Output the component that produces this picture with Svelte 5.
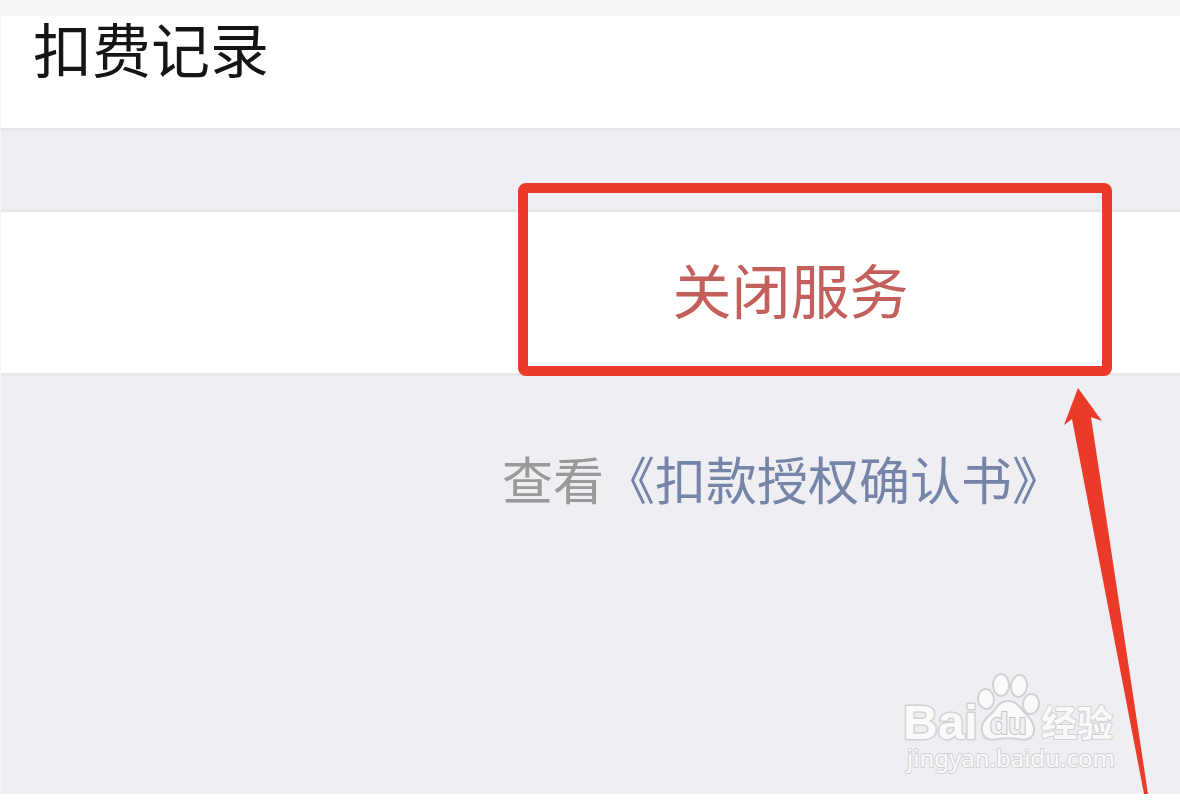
<script>
  const recordsTitle = '扣费记录';
  const closeLabel = '关闭服务';
  const agreement = '《扣款授权确认书》';
</script>

<main>
  <div class="topbar"></div>

  <section class="row records">
    <h1>{recordsTitle}</h1>
  </section>

  <section class="row service">
    <button type="button">{closeLabel}</button>
    <div class="marker"></div>
  </section>

  <p class="agreement">
    <span>查看</span><a href="#agreement">{agreement}</a>
  </p>

  <svg class="arrow" width="92" height="406" viewBox="0 0 92 406" aria-hidden="true">
    <path d="M18 0 L42 33 L31 29 L88 406 H84 L12 31 L4 37 Z" />
  </svg>

  <svg class="logo" width="230" height="116" viewBox="0 0 230 116" role="img" aria-label="Baidu">
    <g class="paw">
      <ellipse cx="86" cy="31" rx="8" ry="10" transform="rotate(-6 86 31)" />
      <ellipse cx="101" cy="17" rx="8" ry="11" />
      <ellipse cx="119" cy="18" rx="8" ry="11" transform="rotate(8 119 18)" />
      <ellipse cx="131" cy="36" rx="8" ry="10" transform="rotate(6 131 36)" />
      <path d="M108 33 C98 33 96 42 90 47 C84 52 81 56 82 63 C83 71 90 73 98 71 C105 70 111 70 118 71 C126 73 133 71 134 63 C135 56 131 51 126 46 C120 41 118 33 108 33 Z" />
    </g>
    <text class="bai" x="3" y="71">Bai</text>
    <text class="du" x="90" y="66">du</text>
    <text class="cn" x="141" y="69">经验</text>
    <text class="site" x="7" y="99">jingyan.baidu.com</text>
  </svg>
</main>

<style>
  :global(body) {
    background: #fff;
  }

  main {
    position: relative;
    box-sizing: border-box;
    min-height: calc(100vh - 6px);
    overflow: hidden;
    border-left: 1px solid #f6f6f8;
    background: #eeeef3;
    font-family: 'Noto Sans CJK SC', 'Noto Sans', sans-serif;
  }

  .topbar {
    height: 16px;
    background: #f4f4f4;
  }

  .row {
    background: #fff;
    border-bottom: 3px solid #e7e7e8;
  }

  .records {
    height: 112px;
    padding-left: 32px;
  }

  h1 {
    margin: 0;
    font-size: 59px;
    font-weight: 400;
    line-height: 64px;
    color: #151515;
  }

  .service {
    position: relative;
    margin-top: 78px;
    padding-left: 400px;
    border-top: 3px solid #e7e7e8;
  }

  button {
    display: block;
    width: 100%;
    height: 161px;
    padding: 0 0 8px;
    border: none;
    background: transparent;
    color: #c4605b;
    font-family: inherit;
    font-size: 59px;
    line-height: 64px;
    cursor: pointer;
  }

  .marker {
    position: absolute;
    top: -29px;
    right: 68px;
    bottom: -3px;
    width: 574px;
    border: 10px solid #ec3a28;
    border-radius: 8px;
    pointer-events: none;
  }

  .agreement {
    margin: 70px 0 0;
    padding-left: 384px;
    text-align: center;
    white-space: nowrap;
    font-size: 51px;
    line-height: 64px;
    color: #999;
  }

  .agreement a {
    color: #7684a8;
    text-decoration: none;
  }

  .arrow {
    position: absolute;
    right: 28px;
    bottom: 0;
    fill: #ec3a28;
  }

  .logo {
    position: absolute;
    right: 50px;
    bottom: 10px;
    fill: #fafafa;
    stroke: #d2d2d6;
    stroke-width: 2px;
    stroke-linejoin: round;
  }

  .logo text {
    paint-order: stroke;
  }

  .logo .bai {
    font-family: 'Liberation Sans', Arial, sans-serif;
    font-size: 48px;
    font-weight: 700;
    stroke-width: 3px;
  }

  .logo .du {
    fill: #f0f0f3;
    stroke: #c4c4c8;
    font-family: 'Liberation Sans', Arial, sans-serif;
    font-size: 30px;
    font-weight: 700;
  }

  .logo .cn {
    font-family: 'Noto Sans CJK SC', sans-serif;
    font-size: 36px;
    font-weight: 700;
  }

  .logo .site {
    font-family: 'Noto Sans', sans-serif;
    font-size: 24px;
  }
</style>
